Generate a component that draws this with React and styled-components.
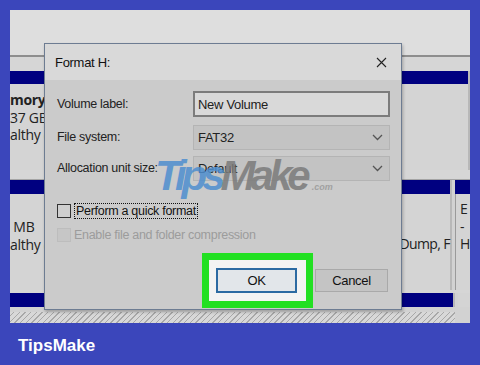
import styled, { createGlobalStyle } from 'styled-components';

const GlobalStyle = createGlobalStyle`
  html, body {
    margin: 0;
    padding: 0;
    background: #3b46bb;
  }
  * { box-sizing: border-box; }
`;

const Page = styled.div`
  width: 480px;
  height: 365px;
  background: #3b46bb;
  padding: 10px 10px 0 10px;
  display: flex;
  flex-direction: column;
  overflow: hidden;
`;

const Screen = styled.div`
  position: relative;
  height: 313px;
  background: #d2d2d2;
  display: flex;
  flex-direction: column;
  overflow: hidden;
  font-family: "Open Sans", "Noto Sans", sans-serif;
  color: #222;
`;

const TopArea = styled.div`
  height: 47px;
  background: #dedede;
  border-bottom: 2px solid #8e8e8e;
`;

const Gap = styled.div`
  height: ${(p) => p.h}px;
  background: #d6d6d6;
  border-bottom: ${(p) => (p.line ? '1px solid #a4a4a4' : 'none')};
`;

const Section = styled.div`
  display: flex;
  gap: 3px;
  height: ${(p) => p.h}px;
`;

const Cell = styled.div`
  flex: ${(p) => (p.small ? '0 0 12px' : '1')};
  display: flex;
  flex-direction: column;
  background: #d4d4d4;
  border-right: ${(p) => (p.small ? 'none' : '2px solid #b8b8b8')};
`;

const Navy = styled.div`
  height: ${(p) => p.h || 13}px;
  background: #000080;
  flex-shrink: 0;
`;

const CellBody = styled.div`
  flex: 1;
  padding-top: ${(p) => p.pt || 0}px;
  display: flex;
  flex-direction: column;
  align-items: ${(p) => (p.right ? 'flex-end' : 'flex-start')};
  font-size: 14px;
  line-height: 17.5px;
  letter-spacing: ${(p) => (p.right ? '-0.6px' : '-0.3px')};
  white-space: nowrap;
  border-left: ${(p) => (p.edge ? '1px solid #9a9a9a' : 'none')};
  padding-left: ${(p) => (p.edge ? 4 : 0)}px;
`;

const Split = styled.div`
  flex: 1;
  display: flex;
  justify-content: space-between;
`;

const Bold = styled.span`
  font-weight: 700;
`;

const Hatched = styled.div`
  height: 11px;
  margin-top: 5px;
  margin-right: 15px;
  background: repeating-linear-gradient(
    -45deg,
    #d8d8d8 0px,
    #d8d8d8 3px,
    #a8a8a8 3px,
    #a8a8a8 4px
  );
`;

const Footer = styled.div`
  flex: 1;
  display: flex;
  align-items: center;
  padding-left: 8px;
  padding-top: 4px;
  font-family: "Liberation Sans", Arial, sans-serif;
  font-weight: 700;
  font-size: 17px;
  color: #ffffff;
`;

/* dialog overlays the disk management view */
const Dialog = styled.div`
  position: absolute;
  left: 34px;
  top: 33px;
  width: 358px;
  height: 267px;
  border: 1px solid #6d7c92;
  background: #cbcbcb;
  display: flex;
  flex-direction: column;
  box-shadow: 1px 2px 3px rgba(0, 0, 0, 0.25);
  font-family: "Liberation Sans", Arial, sans-serif;
  letter-spacing: -0.3px;
`;

const TitleBar = styled.div`
  height: 36px;
  background: #d9d9d9;
  display: flex;
  align-items: center;
  justify-content: space-between;
  padding: 0 14px 0 10px;
  font-size: 13px;
  color: #111;
`;

const Body = styled.div`
  flex: 1;
  display: flex;
  flex-direction: column;
  padding: 11px 11px 0 12px;
`;

const FieldRow = styled.div`
  display: flex;
  align-items: center;
  justify-content: space-between;
  height: 26px;
  margin-bottom: ${(p) => p.mb || 0}px;
  font-size: 12.5px;
`;

const TextBox = styled.div`
  width: 197px;
  height: 26px;
  border: 2px solid #7c7c7c;
  background: #d9d9d9;
  display: flex;
  align-items: center;
  padding-left: 3px;
  font-size: 13px;
`;

const Select = styled.div`
  width: 197px;
  height: 25px;
  border: 1px solid #b4b4b4;
  background: #c3c3c3;
  display: flex;
  align-items: center;
  justify-content: space-between;
  padding: 0 6px 0 4px;
  font-size: 13px;
`;

const CheckRow = styled.div`
  display: flex;
  align-items: center;
  gap: 3px;
  height: 15px;
  margin-bottom: ${(p) => p.mb || 0}px;
  font-size: 12.5px;
  color: ${(p) => (p.disabled ? '#9c9c9c' : '#111')};
`;

const Box = styled.span`
  width: 14px;
  height: 14px;
  border: 1px solid ${(p) => (p.disabled ? '#bdbdbd' : '#333')};
  background: ${(p) => (p.disabled ? '#c6c6c6' : '#cfcfcf')};
`;

const FocusLabel = styled.span`
  border: 1px dotted #111;
  padding: 0 1px;
  line-height: 14px;
`;

const ButtonRow = styled.div`
  margin-top: auto;
  display: flex;
  align-items: center;
  justify-content: flex-end;
  gap: 2px;
  padding-right: 2px;
  padding-bottom: 1px;
`;

const Highlight = styled.div`
  border: 7px solid #22e022;
  background: #f3f3f3;
  padding: 8px 9px 8px 7px;
`;

const Button = styled.div`
  width: ${(p) => p.w}px;
  height: ${(p) => p.hgt}px;
  display: flex;
  align-items: center;
  justify-content: center;
  font-size: 13px;
  color: #111;
  background: ${(p) => (p.primary ? '#e2e6ea' : '#c4c4c4')};
  border: ${(p) => (p.primary ? '2px solid #2c6aa2' : '1px solid #a9a9a9')};
`;

const Watermark = styled.div`
  position: absolute;
  left: 145px;
  top: 142px;
  font-family: "Liberation Sans", Arial, sans-serif;
  font-weight: 700;
  font-style: italic;
  font-size: 42px;
  letter-spacing: -5px;
  opacity: 0.85;
  pointer-events: none;
  white-space: nowrap;

  .tips { color: #4f8fcf; }
  .make { color: #7b7b7b; }
  .com {
    font-size: 9px;
    letter-spacing: 0;
    color: #9a9a9a;
    margin-left: 6px;
  }
`;

const Chevron = () => (
  <svg width="11" height="7" viewBox="0 0 11 7">
    <path d="M1 1 L5.5 5.5 L10 1" fill="none" stroke="#555" strokeWidth="1.3" />
  </svg>
);

const CloseIcon = () => (
  <svg width="11" height="11" viewBox="0 0 11 11">
    <path d="M1 1 L10 10 M10 1 L1 10" stroke="#222" strokeWidth="1.1" />
  </svg>
);

export default function App() {
  return (
    <>
      <GlobalStyle />
      <Page>
        <Screen>
          <TopArea />
          <Gap h={14} />
          <Section h={99}>
            <Cell>
              <Navy />
              <CellBody pt={7}>
                <Bold>mory</Bold>
                <span>37 GB</span>
                <span>althy (</span>
              </CellBody>
            </Cell>
          </Section>
          <Gap h={10} line />
          <Section h={110}>
            <Cell>
              <Navy h={14} />
              <Split>
                <CellBody pt={24}>
                  <span>&nbsp;MB</span>
                  <span>althy (</span>
                </CellBody>
                <CellBody pt={41} right>
                  <span>Dump, F</span>
                </CellBody>
              </Split>
            </Cell>
            <Cell small>
              <Navy h={14} />
              <CellBody pt={6} edge>
                <span>E</span>
                <span>-</span>
                <span>H</span>
              </CellBody>
            </Cell>
          </Section>
          <Gap h={3} />
          <Section h={14}>
            <Cell>
              <Navy h={14} />
            </Cell>
            <Cell small />
          </Section>
          <Hatched />

          <Dialog>
            <TitleBar>
              <span>Format H:</span>
              <CloseIcon />
            </TitleBar>
            <Body>
              <FieldRow mb={7}>
                <span>Volume label:</span>
                <TextBox>New Volume</TextBox>
              </FieldRow>
              <FieldRow mb={5}>
                <span>File system:</span>
                <Select>
                  <span>FAT32</span>
                  <Chevron />
                </Select>
              </FieldRow>
              <FieldRow mb={22}>
                <span>Allocation unit size:</span>
                <Select>
                  <span>Default</span>
                  <Chevron />
                </Select>
              </FieldRow>
              <CheckRow mb={9}>
                <Box />
                <FocusLabel>Perform a quick format</FocusLabel>
              </CheckRow>
              <CheckRow disabled>
                <Box disabled />
                <span>Enable file and folder compression</span>
              </CheckRow>
              <ButtonRow>
                <Highlight>
                  <Button primary w={81} hgt={25}>OK</Button>
                </Highlight>
                <Button w={73} hgt={23}>Cancel</Button>
              </ButtonRow>
            </Body>
          </Dialog>

          <Watermark>
            <span className="tips">Tips</span>
            <span className="make">Make</span>
            <span className="com">.com</span>
          </Watermark>
        </Screen>
        <Footer>TipsMake</Footer>
      </Page>
    </>
  );
}
